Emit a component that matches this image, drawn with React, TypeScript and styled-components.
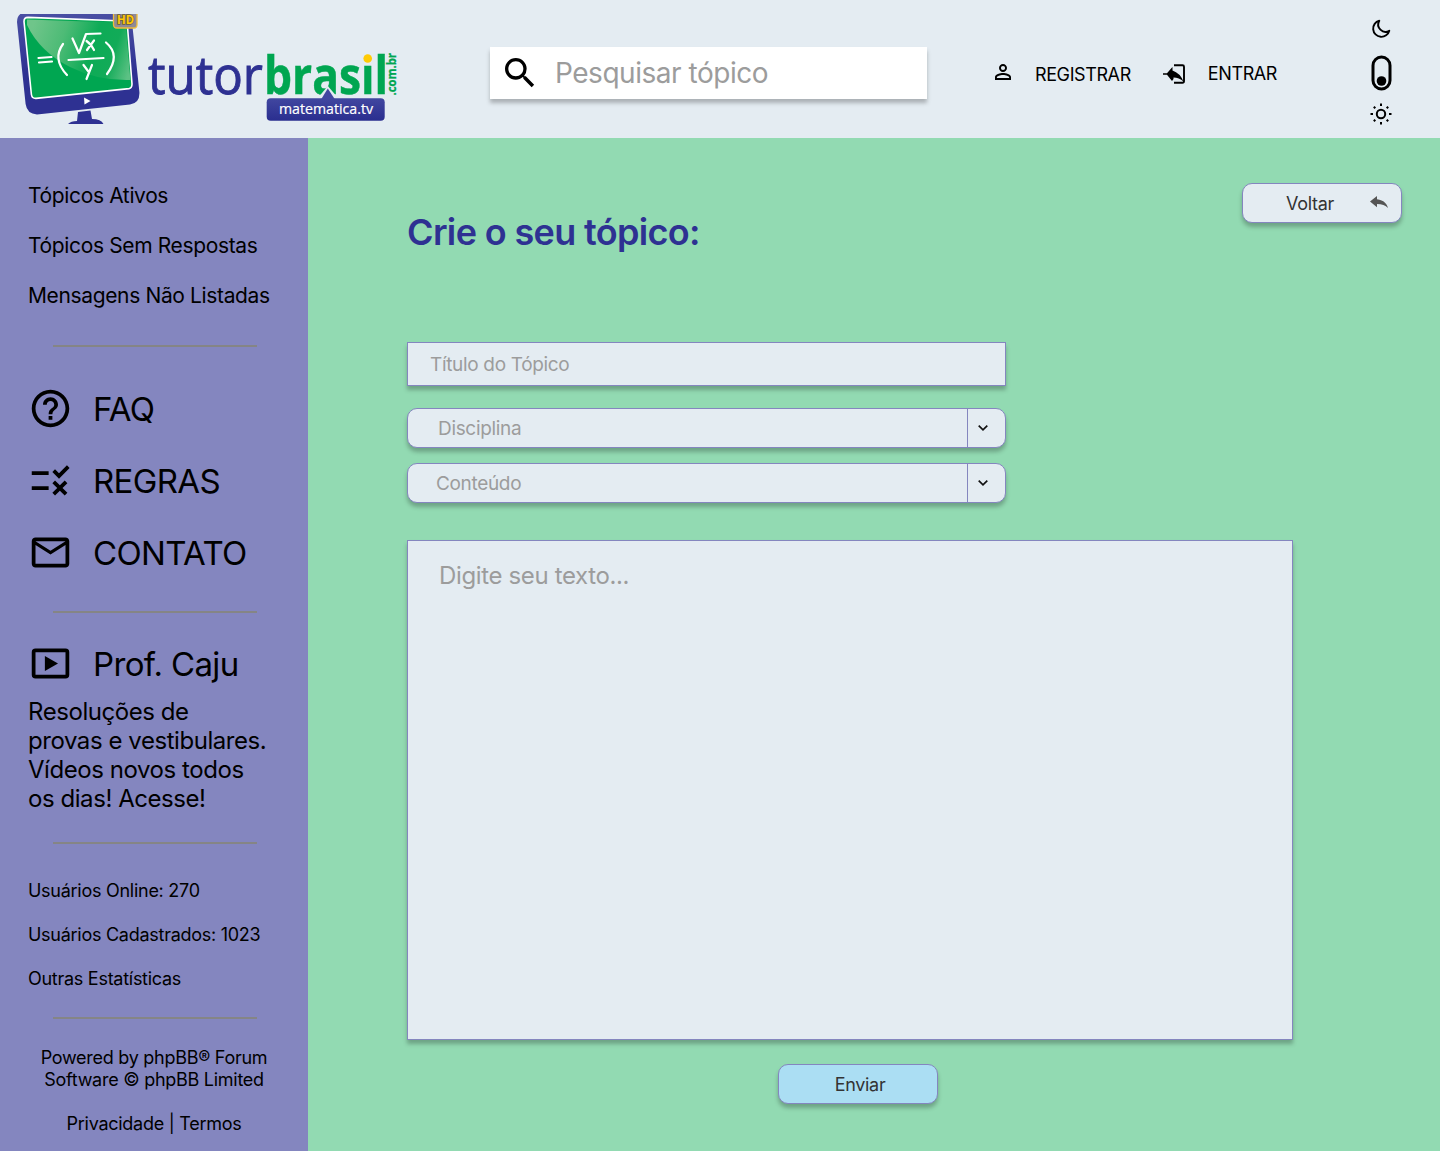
import React from "react";
import styled, { createGlobalStyle, css } from "styled-components";
import { MdHelpOutline, MdOutlineMailOutline, MdOutlineRule, MdSearch, MdPersonOutline } from "react-icons/md";

const GlobalStyle = createGlobalStyle`
  * { box-sizing: border-box; }
  body { margin: 0; font-family: Inter, "Liberation Sans", sans-serif; color: #000; background: #92dab2; }
  button, input, textarea { font-family: inherit; }
  svg { display: block; flex: none; }
`;

const colors = {
  mist: "#e4ecf2",
  lilac: "#8486bf",
  mint: "#92dab2",
  navy: "#2e3192",
  placeholder: "#9c9c9c",
};

const raised = css`
  box-shadow: 0 4px 4px rgba(0, 0, 0, 0.25);
`;

const Page = styled.div`
  width: 1440px;
  height: 1151px;
  display: grid;
  grid-template: 138px 1fr / 308px 1fr;
  overflow: hidden;
`;

const Header = styled.header`
  grid-column: 1 / -1;
  background: ${colors.mist};
  display: flex;
  align-items: center;
  padding: 8px 48px 0 17px;
`;

const LogoLink = styled.a`
  align-self: flex-start;
  margin: 6px 93px 0 0;
`;

const SearchBox = styled.label`
  width: 437px;
  height: 52px;
  background: #fff;
  display: flex;
  align-items: center;
  padding-left: 10px;
  ${raised}
`;

const SearchInput = styled.input`
  border: 0;
  outline: 0;
  background: transparent;
  width: 340px;
  height: 50px;
  margin-left: 15px;
  padding: 0;
  font-size: 28px;
  letter-spacing: -0.47px;
  &::placeholder { color: ${colors.placeholder}; opacity: 1; }
`;

const AuthNav = styled.nav`
  display: flex;
  align-items: center;
  margin-left: 64px;
`;

const AuthLink = styled.a<{ $gap: number; $left?: number; $iconDrop: number }>`
  display: flex;
  align-items: center;
  gap: ${(p) => p.$gap}px;
  margin-left: ${(p) => p.$left ?? 0}px;
  font-size: 18px;
  line-height: 22px;
  letter-spacing: -0.4px;
  svg { margin-top: ${(p) => p.$iconDrop}px; }
`;

const AuthLabel = styled.span<{ $drop: number }>`
  padding-top: ${(p) => p.$drop}px;
`;

const ThemeSwitch = styled.div`
  margin-left: auto;
  margin-top: -2px;
  height: 106px;
  display: flex;
  flex-direction: column;
  align-items: center;
  justify-content: space-between;
`;

const Sidebar = styled.aside`
  background: ${colors.lilac};
  padding: 44px 28px 0;
  display: flex;
  flex-direction: column;
`;

const TopicList = styled.nav`
  display: flex;
  flex-direction: column;
  gap: 23px;
  font-size: 21px;
  line-height: 27px;
  letter-spacing: -0.36px;
  white-space: nowrap;
`;

const Divider = styled.hr<{ $top: number; $bottom: number }>`
  width: 204px;
  height: 2px;
  border: 0;
  background: #858585;
  flex: none;
  margin: ${(p) => p.$top}px 0 ${(p) => p.$bottom}px 25px;
`;

const MenuList = styled.nav`
  display: flex;
  flex-direction: column;
  gap: 31px;
`;

const MenuItem = styled.a`
  display: flex;
  align-items: center;
  height: 41px;
  gap: 20px;
  font-size: 33px;
  line-height: 41px;
  letter-spacing: -0.65px;
`;

const Blurb = styled.p`
  margin: 12px 0 0;
  font-size: 24px;
  line-height: 29px;
  white-space: nowrap;
  letter-spacing: -0.44px;
`;

const Stats = styled.div`
  display: flex;
  flex-direction: column;
  gap: 22px;
  font-size: 18px;
  line-height: 22px;
  letter-spacing: -0.27px;
`;

const Credits = styled.div`
  text-align: center;
  font-size: 18px;
  line-height: 22px;
  letter-spacing: -0.27px;
  white-space: nowrap;
`;

const CreditLinks = styled.div`
  margin-top: 22px;
`;

const Main = styled.main`
  background: ${colors.mint};
  padding: 45px 38px 0 99px;
  display: flex;
  flex-direction: column;
`;

const TitleRow = styled.div`
  display: flex;
  justify-content: space-between;
  align-items: flex-start;
  height: 159px;
`;

const Title = styled.h1`
  margin: 27px 0 0;
  font-size: 36px;
  line-height: 44px;
  font-weight: 600;
  color: ${colors.navy};
  letter-spacing: -0.65px;
`;

const ActionButton = styled.button<{ $bg: string; $left?: number }>`
  width: 160px;
  height: 40px;
  flex: none;
  border: 1px solid ${colors.lilac};
  border-radius: 10px;
  background: ${(p) => p.$bg};
  color: #333;
  font-size: 18px;
  line-height: 22px;
  letter-spacing: -0.3px;
  padding: 2px 0 0 ${(p) => p.$left ?? 0}px;
  display: flex;
  align-items: center;
  justify-content: center;
  ${raised}
  svg { margin-bottom: 4px; }
`;

const BackLabel = styled.span`
  margin: 0 36px 0 30px;
`;

const fieldBase = css`
  border: 1px solid ${colors.lilac};
  background: ${colors.mist};
  color: ${colors.placeholder};
  ${raised}
`;

const TitleInput = styled.input`
  ${fieldBase}
  width: 599px;
  height: 44px;
  flex: none;
  padding: 0 22px;
  outline: 0;
  font-size: 19px;
  letter-spacing: -0.33px;
  &::placeholder { color: ${colors.placeholder}; opacity: 1; }
`;

const Select = styled.div<{ $top: number; $indent: number }>`
  ${fieldBase}
  width: 599px;
  height: 40px;
  flex: none;
  margin-top: ${(p) => p.$top}px;
  padding-left: ${(p) => p.$indent}px;
  border-radius: 10px;
  display: flex;
  align-items: center;
  justify-content: space-between;
  font-size: 19px;
  letter-spacing: -0.33px;
`;

const SelectArrow = styled.span`
  width: 38px;
  height: 100%;
  border-left: 1px solid ${colors.lilac};
  display: flex;
  align-items: center;
  padding-left: 10px;
`;

const Editor = styled.textarea`
  ${fieldBase}
  width: 886px;
  height: 500px;
  flex: none;
  margin: 37px 0 24px;
  padding: 20px 31px;
  outline: 0;
  resize: none;
  font-size: 24px;
  line-height: 29px;
  letter-spacing: -0.36px;
  &::placeholder { color: ${colors.placeholder}; opacity: 1; }
`;

const SubmitRow = styled.div`
  padding-left: 371px;
`;

const Logo = () => (
  <svg width="380" height="110" viewBox="17 14 380 110">
    <defs>
      <linearGradient id="frame" x1="0" y1="0" x2="0" y2="1">
        <stop offset="0" stopColor="#4a50a4" />
        <stop offset="0.6" stopColor="#2e3192" />
      </linearGradient>
      <linearGradient id="glare" gradientUnits="userSpaceOnUse" x1="30" y1="35" x2="130" y2="70">
        <stop offset="0" stopColor="#6fc58a" />
        <stop offset="0.3" stopColor="#4dbb76" />
        <stop offset="0.6" stopColor="#0dab56" />
        <stop offset="0.8" stopColor="#12ab58" />
        <stop offset="1" stopColor="#5cc184" />
      </linearGradient>
      <linearGradient id="bubble" x1="0" y1="0" x2="0" y2="1">
        <stop offset="0" stopColor="#4147a0" />
        <stop offset="1" stopColor="#2a2e8f" />
      </linearGradient>
    </defs>
    <path d="M17 22Q17 13 26 12L123 14Q131 14 132 22L139.400 92Q140 103 130 104.500L37 114.400Q27 114 25.600 104Z" fill="url(#frame)" />
    <path d="M28 17.400L124 21Q127 21 127.300 24L132 84Q132 88 129 88.600L36 98.400Q32 98.600 31.400 94.500L24 21.500Q24 17.400 28 17.400Z" fill="#00a651" stroke="#fff" strokeWidth="1.600" />
    <path d="M27 19.500L125.500 22.800L130.400 80Q98 81 70 67Q40 52 27 25Z" fill="url(#glare)" />
    <g fill="none" stroke="#fff" strokeWidth="2.200" strokeLinecap="round" strokeLinejoin="round">
      <path d="M38.500 58L51.500 57M39 62.500L52 61.500M63 44Q52 59 67 75M106 42.500Q121 55 107 74M68.500 60L103.500 58M72.500 38.500L79 53L86 34L100.500 33.500M86.500 41Q91 44 94 50M94 40.500L87 50M83.500 65L88 71M92 65L86.500 79" />
    </g>
    <path d="M84 97.500L90.500 101L84.500 104.500Z" fill="#fff" />
    <path d="M78 112L90.500 110.500L92 119Q101 119 103.500 124L68 124Q71 121 77 121Z" fill={colors.navy} />
    <path d="M113.500 14V24.500Q113.500 28 117 28H134Q137 28 137 24.500V14" fill="#8f8a94" stroke="#f0bd3a" strokeWidth="1.300" />
    <text x="117" y="24.300" fontFamily="Open Sans" fontWeight="700" fontSize="11.500" fill="#ffca05" stroke="#6b5a3a" strokeWidth="1.600" paintOrder="stroke" textLength="17" lengthAdjust="spacingAndGlyphs">HD</text>
    <text x="148" y="94" fontFamily="Open Sans" fontSize="53" fill={colors.navy} stroke={colors.navy} strokeWidth="0.900" textLength="115" lengthAdjust="spacingAndGlyphs">tutor</text>
    <text x="264" y="94" fontFamily="Open Sans" fontWeight="700" fontSize="52" fill="#00a651" stroke="#00a651" strokeWidth="0.500" textLength="124" lengthAdjust="spacingAndGlyphs">brasil</text>
    <rect x="362" y="52" width="11" height="12" fill={colors.mist} />
    <circle cx="367.700" cy="58.500" r="4.300" fill="#ffcb05" />
    <path d="M317 99L327.800 86L339 99Z" fill={colors.mist} />
    <rect x="266.700" y="98.300" width="118" height="22.500" rx="4" fill="url(#bubble)" />
    <path d="M321 99.500L327.800 88.500L335 99.500Z" fill="#4147a0" />
    <text x="279" y="113.500" fontFamily="Open Sans" fontSize="14.500" fill="#fff" stroke="#fff" strokeWidth="0.200" textLength="94" lengthAdjust="spacingAndGlyphs">matematica.tv</text>
    <text transform="translate(395.500 95.500) rotate(-90)" fontFamily="Open Sans" fontWeight="700" fontSize="12" fill="#00a651" stroke="#00a651" strokeWidth="0.300" textLength="42.500" lengthAdjust="spacingAndGlyphs">.com.br</text>
  </svg>
);

const EnterIcon = () => (
  <svg width="23" height="20" viewBox="0 0 23 20">
    <path d="M11 1.200H19.500Q21 1.200 21 2.700V17Q21 18.700 19.500 18.700H11" fill="none" stroke="#000" strokeWidth="1.900" />
    <path d="M0 9.200H4L8.500 4L9.500 3V6.500Q17 9 20.500 17.500Q16 13.500 10.500 13.500V15L9 17L4 10.800H0Z" fill="#000" />
  </svg>
);

const MoonIcon = () => (
  <svg width="20" height="20" viewBox="0 0 20 20">
    <path d="M8.300 1.700A8.200 8.200 0 1 0 18.300 11.700A7.300 7.300 0 0 1 8.300 1.700Z" fill="none" stroke="#000" strokeWidth="1.900" strokeLinejoin="round" />
  </svg>
);

const ToggleIcon = () => (
  <svg width="21" height="40" viewBox="0 -4 21 40">
    <rect x="2" y="2" width="17" height="32" rx="8.500" fill="none" stroke="#000" strokeWidth="3" />
    <circle cx="10.500" cy="26" r="4.800" fill="#000" />
  </svg>
);

const SunIcon = () => (
  <svg width="22" height="22" viewBox="0 0 22 22" fill="none" stroke="#000" strokeWidth="2">
    <circle cx="11" cy="11" r="4.200" />
    <path d="M11 .5V3M11 19V21.500M.5 11H3M19 11H21.500M3.800 3.800L5.300 5.300M16.700 16.700L18.200 18.200M3.800 18.200L5.300 16.700M16.700 5.300L18.200 3.800" />
  </svg>
);

const ReplyIcon = () => (
  <svg width="18" height="12" viewBox="3 5 18 15" preserveAspectRatio="none">
    <path d="M10 9V5l-7 7 7 7v-4.100c5 0 8.500 1.600 11 5.100-1-5-4-10-11-11z" fill="#555" />
  </svg>
);

const VideoIcon = () => (
  <svg width="45" height="45" viewBox="0 0 24 24">
    <rect x="3" y="5" width="18" height="14" rx="1" fill="none" stroke="#000" strokeWidth="2" />
    <path d="M9 8V16L16 12Z" fill="#000" />
  </svg>
);

const ChevronIcon = () => (
  <svg width="10" height="6" viewBox="0 0 10 6">
    <path d="M.7 .7L5 4.800L9.300 .7" fill="none" stroke="#111" strokeWidth="1.700" />
  </svg>
);

const IconSlot = styled.span`
  margin-top: -2px;
`;

const menu = [
  { label: "FAQ", Icon: MdHelpOutline },
  { label: "REGRAS", Icon: MdOutlineRule },
  { label: "CONTATO", Icon: MdOutlineMailOutline },
];

export default function App() {
  return (
    <>
      <GlobalStyle />
      <Page>
        <Header>
          <LogoLink><Logo /></LogoLink>
          <SearchBox>
            <MdSearch size={40} />
            <SearchInput placeholder="Pesquisar tópico" />
          </SearchBox>
          <AuthNav>
            <AuthLink $gap={20} $iconDrop={-2}><MdPersonOutline size={24} /><AuthLabel $drop={4}>REGISTRAR</AuthLabel></AuthLink>
            <AuthLink $gap={22} $left={32} $iconDrop={2}><EnterIcon /><AuthLabel $drop={2}>ENTRAR</AuthLabel></AuthLink>
          </AuthNav>
          <ThemeSwitch>
            <MoonIcon />
            <ToggleIcon />
            <SunIcon />
          </ThemeSwitch>
        </Header>
        <Sidebar>
          <TopicList>
            <a>Tópicos Ativos</a>
            <a>Tópicos Sem Respostas</a>
            <a>Mensagens Não Listadas</a>
          </TopicList>
          <Divider $top={36} $bottom={42} />
          <MenuList>
            {menu.map(({ label, Icon }) => (
              <MenuItem key={label}><IconSlot><Icon size={45} /></IconSlot>{label}</MenuItem>
            ))}
          </MenuList>
          <Divider $top={37} $bottom={31} />
          <MenuItem><IconSlot><VideoIcon /></IconSlot>Prof. Caju</MenuItem>
          <Blurb>
            Resoluções de<br />provas e vestibulares.<br />Vídeos novos todos<br />os dias! Acesse!
          </Blurb>
          <Divider $top={29} $bottom={36} />
          <Stats>
            <span>Usuários Online: 270</span>
            <span>Usuários Cadastrados: 1023</span>
            <span>Outras Estatísticas</span>
          </Stats>
          <Divider $top={27} $bottom={28} />
          <Credits>
            Powered by phpBB® Forum<br />Software © phpBB Limited
            <CreditLinks>Privacidade | Termos</CreditLinks>
          </Credits>
        </Sidebar>
        <Main>
          <TitleRow>
            <Title>Crie o seu tópico:</Title>
            <ActionButton $bg={colors.mist}><BackLabel>Voltar</BackLabel><ReplyIcon /></ActionButton>
          </TitleRow>
          <TitleInput placeholder="Título do Tópico" />
          <Select $top={22} $indent={30}>Disciplina<SelectArrow><ChevronIcon /></SelectArrow></Select>
          <Select $top={15} $indent={28}>Conteúdo<SelectArrow><ChevronIcon /></SelectArrow></Select>
          <Editor placeholder="Digite seu texto..." />
          <SubmitRow>
            <ActionButton $bg="#abdef3" $left={4}>Enviar</ActionButton>
          </SubmitRow>
        </Main>
      </Page>
    </>
  );
}
